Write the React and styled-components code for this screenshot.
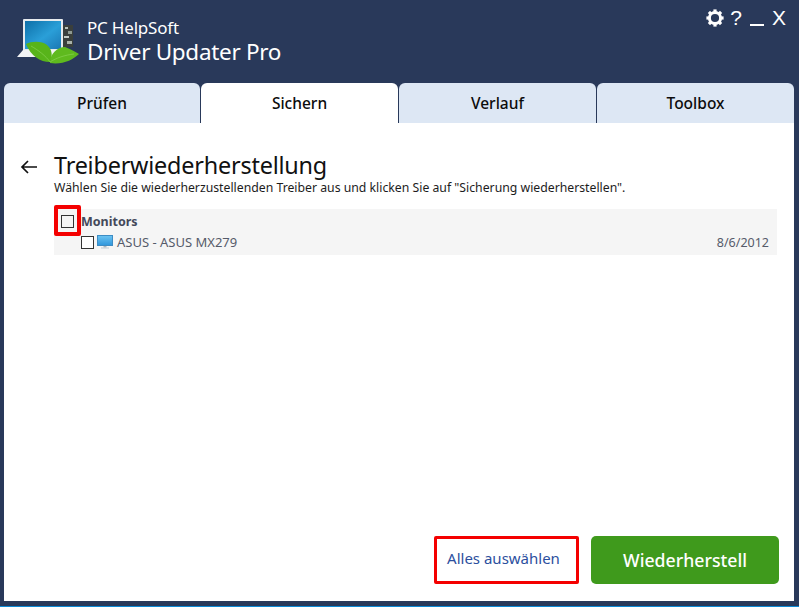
import styled, { createGlobalStyle } from "styled-components";

const GlobalStyle = createGlobalStyle`
  html, body {
    margin: 0;
    padding: 0;
    height: 100%;
    overflow: hidden;
  }
  body {
    background: #29395a;
    font-family: "Noto Sans", "Open Sans", sans-serif;
  }
`;

function Logo() {
  return (
    <LogoSvg viewBox="17 18 64 48" xmlns="http://www.w3.org/2000/svg">
      <defs>
        <linearGradient id="screen" x1="0" y1="0" x2="1" y2="1">
          <stop offset="0" stopColor="#0d6fa8" />
          <stop offset="0.55" stopColor="#2a9fd8" />
          <stop offset="1" stopColor="#1b78b4" />
        </linearGradient>
      </defs>
      <rect x="63" y="25" width="10" height="22" fill="#3a3f3c" />
      <rect x="65" y="27" width="3" height="2" fill="#b9c2bb" />
      <rect x="68" y="31" width="4" height="3" fill="#8f9a92" />
      <rect x="64" y="36" width="5" height="2" fill="#c4cbc5" />
      <rect x="67" y="41" width="5" height="3" fill="#a9b2aa" />
      <rect x="23" y="19" width="40" height="32" rx="1" fill="#e6ebee" />
      <rect x="25" y="21" width="36" height="28" fill="url(#screen)" />
      <path d="M23 50 H60 V57 H17 Z" fill="#f2f4f5" />
      <path d="M26 44 C32 41 42 41 47 45 C52 49 53 56 50 62 C40 62 31 56 26 44 Z" fill="#58b41a" />
      <path d="M50 63 C50 54 57 47 65 47 C71 49 75 52 79 54 C73 60 62 65 50 63 Z" fill="#5fba1e" />
      <path d="M31 46 C38 50 46 56 50 62 M74 54 C65 55 56 58 50 62" stroke="#8fd65a" strokeWidth="0.6" fill="none" />
    </LogoSvg>
  );
}

function GearIcon() {
  const teeth = [0, 45, 90, 135, 180, 225, 270, 315];
  return (
    <GearSvg viewBox="0 0 18 18" xmlns="http://www.w3.org/2000/svg">
      <circle cx="9" cy="9" r="5.6" fill="none" stroke="#fff" strokeWidth="3" />
      {teeth.map((angle) => (
        <rect key={angle} x="7.4" y="0.4" width="3.2" height="3" fill="#fff" transform={`rotate(${angle} 9 9)`} />
      ))}
    </GearSvg>
  );
}

function MonitorIcon() {
  return (
    <MonitorSvg viewBox="0 0 16 14" xmlns="http://www.w3.org/2000/svg">
      <defs>
        <linearGradient id="mon" x1="0" y1="0" x2="0" y2="1">
          <stop offset="0" stopColor="#6cc4f2" />
          <stop offset="1" stopColor="#2f96dc" />
        </linearGradient>
      </defs>
      <rect x="0.5" y="0.5" width="15" height="10" fill="url(#mon)" stroke="#3d8cc4" />
      <rect x="6.5" y="11" width="3" height="1.5" fill="#a8b4bd" />
      <rect x="4" y="12.5" width="8" height="1" fill="#c2ccd3" />
    </MonitorSvg>
  );
}

function App() {
  return (
    <>
      <GlobalStyle />
      <Window>
        <Header>
          <Brand>
            <Logo />
            <BrandText>
              <Company>PC HelpSoft</Company>
              <Product>Driver Updater Pro</Product>
            </BrandText>
          </Brand>
          <WindowControls>
            <GearIcon />
            <ControlGlyph>?</ControlGlyph>
            <MinimizeBar />
            <ControlGlyph>X</ControlGlyph>
          </WindowControls>
        </Header>
        <Tabs>
          <Tab>Prüfen</Tab>
          <Tab $active>Sichern</Tab>
          <Tab>Verlauf</Tab>
          <Tab>Toolbox</Tab>
        </Tabs>
        <Panel>
          <TitleRow>
            <BackArrow viewBox="0 0 18 16" xmlns="http://www.w3.org/2000/svg">
              <path d="M17 8 H2 M8 2 L2 8 L8 14" fill="none" stroke="#111" strokeWidth="1.7" />
            </BackArrow>
            <TitleBlock>
              <Title>Treiberwiederherstellung</Title>
              <Subtitle>
                Wählen Sie die wiederherzustellenden Treiber aus und klicken Sie auf "Sicherung wiederherstellen".
              </Subtitle>
            </TitleBlock>
          </TitleRow>
          <DriverList>
            <GroupRow>
              <Highlight />
              <GroupCheck />
              <GroupName>Monitors</GroupName>
            </GroupRow>
            <DriverRow>
              <Check />
              <MonitorIcon />
              <DriverName>ASUS - ASUS MX279</DriverName>
              <DriverDate>8/6/2012</DriverDate>
            </DriverRow>
          </DriverList>
          <Footer>
            <SelectAll>Alles auswählen</SelectAll>
            <RestoreButton>Wiederherstell</RestoreButton>
          </Footer>
        </Panel>
        <BottomStrip />
      </Window>
    </>
  );
}

export default App;

const Window = styled.div`
  display: flex;
  flex-direction: column;
  width: 799px;
  height: 607px;
  overflow: hidden;
`;

const Header = styled.header`
  display: flex;
  justify-content: space-between;
  height: 83px;
  padding: 0 13px 0 17px;
  box-sizing: border-box;
`;

const Brand = styled.div`
  display: flex;
  align-items: flex-start;
  gap: 6px;
  padding-top: 18px;
`;

const LogoSvg = styled.svg`
  width: 64px;
  height: 48px;
`;

const BrandText = styled.div`
  display: flex;
  flex-direction: column;
  color: #fff;
`;

const Company = styled.div`
  font-size: 17px;
  line-height: 20px;
  letter-spacing: -0.2px;
`;

const Product = styled.div`
  font-size: 22.5px;
  line-height: 27px;
  letter-spacing: -0.3px;
`;

const WindowControls = styled.div`
  display: flex;
  align-items: center;
  height: 20px;
  margin-top: 8px;
`;

const GearSvg = styled.svg`
  width: 18px;
  height: 18px;
  margin-right: 6px;
`;

const ControlGlyph = styled.span`
  font-family: "Liberation Sans", sans-serif;
  font-size: 21px;
  line-height: 20px;
  color: #fff;
`;

const MinimizeBar = styled.span`
  width: 14px;
  height: 2px;
  background: #fff;
  margin: 14px 8px 0 8px;
`;

const Tabs = styled.nav`
  display: grid;
  grid-template-columns: 196px 197px 197px 197px;
  column-gap: 1px;
  height: 40px;
  padding-left: 4px;
  align-items: stretch;
`;

const Tab = styled.div`
  display: flex;
  align-items: center;
  justify-content: center;
  border-radius: 6px 6px 0 0;
  background: ${(props) => (props.$active ? "#ffffff" : "#dde7f4")};
  font-size: 15.5px;
  font-weight: 500;
  color: #0c0c0c;
`;

const Panel = styled.main`
  display: flex;
  flex-direction: column;
  width: 790px;
  height: 478px;
  margin-left: 4px;
  padding: 28px 15px 17px 16px;
  background: #fff;
  box-sizing: border-box;
`;

const TitleRow = styled.div`
  display: flex;
  align-items: flex-start;
  gap: 16px;
`;

const BackArrow = styled.svg`
  width: 18px;
  height: 16px;
  margin-top: 8px;
`;

const TitleBlock = styled.div`
  display: flex;
  flex-direction: column;
`;

const Title = styled.h1`
  margin: 0;
  font-size: 23.4px;
  font-weight: 400;
  line-height: 29px;
  letter-spacing: -0.2px;
  color: #111;
`;

const Subtitle = styled.p`
  margin: 0;
  font-size: 12.25px;
  line-height: 16px;
  color: #1c1c1c;
`;

const DriverList = styled.section`
  display: flex;
  flex-direction: column;
  margin: 13px 2px 0 34px;
  background: #f5f5f5;
  height: 46px;
`;

const GroupRow = styled.div`
  position: relative;
  display: flex;
  align-items: center;
  height: 24px;
  padding-left: 7px;
`;

/* red annotation drawn over the checkbox */
const Highlight = styled.div`
  position: absolute;
  left: 0;
  top: -4px;
  width: 27px;
  height: 31px;
  border: 4px solid #f40000;
  border-radius: 2px;
  box-sizing: border-box;
`;

const Check = styled.span`
  display: block;
  flex: none;
  width: 13px;
  height: 13px;
  box-sizing: border-box;
  border: 1px solid #333;
  background: #fff;
`;

const GroupCheck = styled(Check)`
  background: transparent;
  margin-top: 1px;
`;

const GroupName = styled.span`
  margin-left: 7px;
  font-size: 12.5px;
  font-weight: 700;
  color: #44495a;
`;

const DriverRow = styled.div`
  display: flex;
  align-items: center;
  height: 18px;
  padding: 0 8px 0 27px;
`;

const MonitorSvg = styled.svg`
  width: 16px;
  height: 14px;
  margin-left: 3px;
`;

const DriverName = styled.span`
  margin-left: 4px;
  font-size: 13px;
  color: #555b6a;
`;

const DriverDate = styled.span`
  margin-left: auto;
  font-size: 12.5px;
  color: #555b6a;
`;

const Footer = styled.footer`
  display: flex;
  justify-content: flex-end;
  align-items: stretch;
  gap: 12px;
  margin-top: auto;
  height: 48px;
`;

const SelectAll = styled.button`
  width: 145px;
  padding: 0 6px 4px 0;
  background: #fff;
  border: 3px solid #f40000;
  border-radius: 2px;
  font-family: inherit;
  font-size: 15px;
  color: #2c4f9e;
`;

const RestoreButton = styled.button`
  width: 188px;
  padding: 0;
  background: #3f9a1c;
  border: none;
  border-radius: 5px;
  font-family: inherit;
  font-size: 17.7px;
  font-weight: 500;
  color: #fff;
`;

const BottomStrip = styled.div`
  height: 1px;
  margin-top: 5px;
  background: #0c8ad6;
`;
